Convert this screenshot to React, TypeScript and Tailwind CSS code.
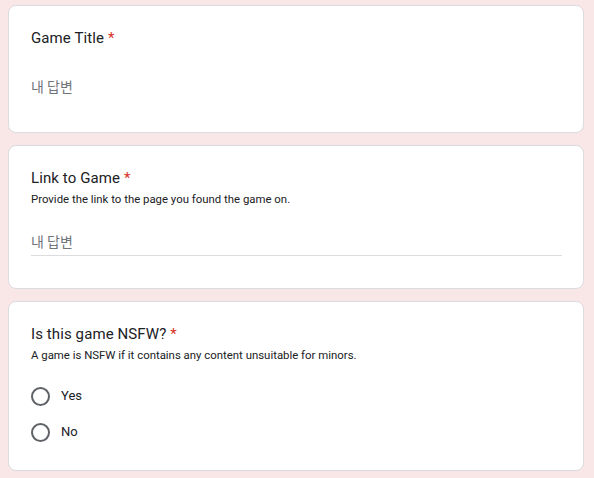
const sans = { fontFamily: 'Roboto, "Noto Sans CJK KR", sans-serif' };

function Title({ text }: { text: string }) {
  return (
    <div className="text-[15px] leading-6 text-[#202124] tracking-[0.1px]">
      {text}
      <span className="text-[#d93025] ml-1">*</span>
    </div>
  );
}

function Answer({ underline }: { underline: boolean }) {
  return (
    <div
      className={
        'h-[25px] pb-1 text-sm leading-5 text-[#70757a] border-b ' +
        (underline ? 'border-[#dadce0]' : 'border-transparent')
      }
      style={{ fontFamily: '"Noto Sans CJK KR", Roboto, sans-serif' }}
    >
      내 답변
    </div>
  );
}

function Radio({ label }: { label: string }) {
  return (
    <div className="h-9 flex items-center gap-[11px]">
      <span className="w-[19px] h-[19px] rounded-full border-2 border-[#5f6368]" />
      <span className="text-[13px] text-[#202124]">{label}</span>
    </div>
  );
}

export default function App() {
  return (
    <div className="min-h-screen bg-[#f9e6e6] pt-[5px]" style={sans}>
      <div className="ml-2 w-[576px] flex flex-col gap-3">
        <div className="bg-white border border-[#dadce0] rounded-lg pl-[22px] pr-[21px] pt-5 pb-[31px]">
          <Title text="Game Title" />
          <div className="mt-[26px]">
            <Answer underline={false} />
          </div>
        </div>

        <div className="bg-white border border-[#dadce0] rounded-lg pl-[22px] pr-[21px] pt-5 pb-8">
          <Title text="Link to Game" />
          <div className="mt-[2px] text-[11.4px] leading-[14px] text-[#202124]">Provide the link to the page you found the game on.</div>
          <div className="mt-[25px]">
            <Answer underline={true} />
          </div>
        </div>

        <div className="bg-white border border-[#dadce0] rounded-lg pl-[22px] pr-[21px] pt-5 pb-5">
          <Title text="Is this game NSFW?" />
          <div className="mt-[2px] text-[11.4px] leading-[14px] text-[#202124]">A game is NSFW if it contains any content unsuitable for minors.</div>
          <div className="mt-4">
            <Radio label="Yes" />
            <Radio label="No" />
          </div>
        </div>
      </div>
    </div>
  );
}
